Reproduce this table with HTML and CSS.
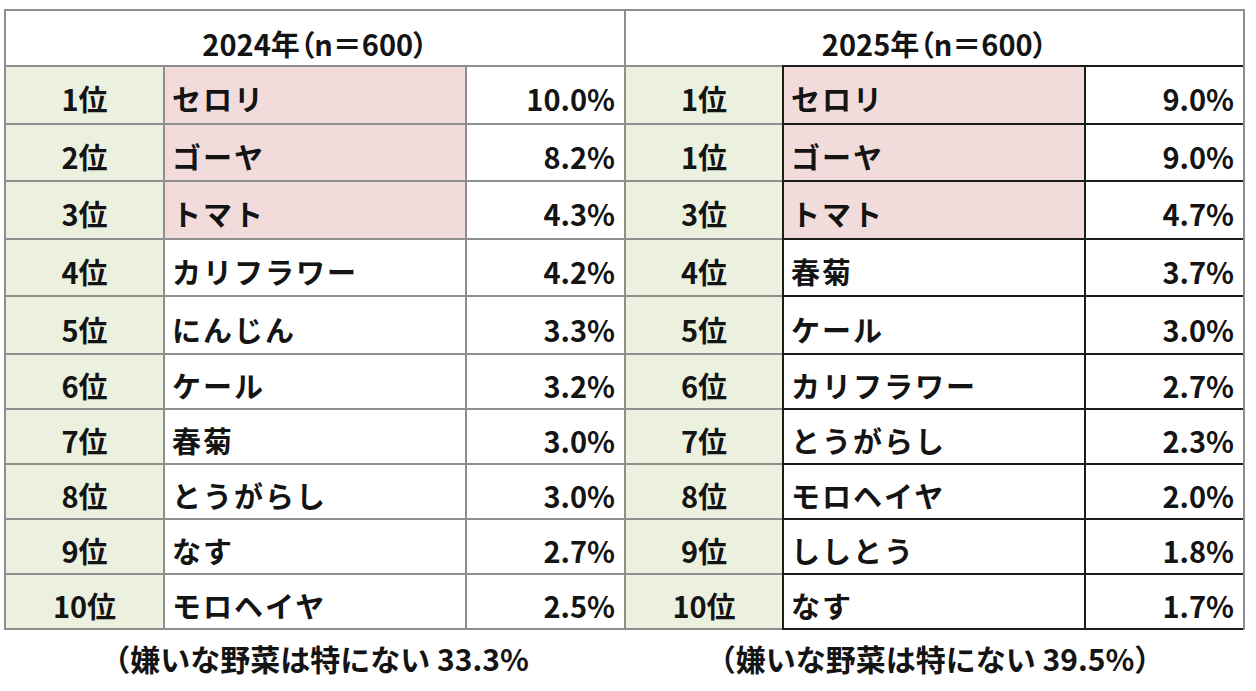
FILE: index.html
```html
<!DOCTYPE html>
<html lang="ja">
<head>
<meta charset="utf-8">
<title>嫌いな野菜ランキング</title>
<link rel="stylesheet" href="styles.css">
</head>
<body>
<div class="page">
  <div class="grid">
    <div class="c hd">2024年（n＝600）</div>
    <div class="c hd">2025年（n＝600）</div>

    <div class="c rk">1位</div><div class="c nm pink">セロリ</div><div class="c pc">10.0%</div>
    <div class="c rk">1位</div><div class="c nm pink dk">セロリ</div><div class="c pc dk">9.0%</div>

    <div class="c rk">2位</div><div class="c nm pink">ゴーヤ</div><div class="c pc">8.2%</div>
    <div class="c rk">1位</div><div class="c nm pink dk">ゴーヤ</div><div class="c pc dk">9.0%</div>

    <div class="c rk">3位</div><div class="c nm pink">トマト</div><div class="c pc">4.3%</div>
    <div class="c rk">3位</div><div class="c nm pink dk">トマト</div><div class="c pc dk">4.7%</div>

    <div class="c rk">4位</div><div class="c nm">カリフラワー</div><div class="c pc">4.2%</div>
    <div class="c rk">4位</div><div class="c nm dk">春菊</div><div class="c pc dk">3.7%</div>

    <div class="c rk">5位</div><div class="c nm">にんじん</div><div class="c pc">3.3%</div>
    <div class="c rk">5位</div><div class="c nm dk">ケール</div><div class="c pc dk">3.0%</div>

    <div class="c rk">6位</div><div class="c nm">ケール</div><div class="c pc">3.2%</div>
    <div class="c rk">6位</div><div class="c nm dk">カリフラワー</div><div class="c pc dk">2.7%</div>

    <div class="c rk">7位</div><div class="c nm">春菊</div><div class="c pc">3.0%</div>
    <div class="c rk">7位</div><div class="c nm dk">とうがらし</div><div class="c pc dk">2.3%</div>

    <div class="c rk">8位</div><div class="c nm">とうがらし</div><div class="c pc">3.0%</div>
    <div class="c rk">8位</div><div class="c nm dk">モロヘイヤ</div><div class="c pc dk">2.0%</div>

    <div class="c rk">9位</div><div class="c nm">なす</div><div class="c pc">2.7%</div>
    <div class="c rk">9位</div><div class="c nm dk">ししとう</div><div class="c pc dk">1.8%</div>

    <div class="c rk">10位</div><div class="c nm">モロヘイヤ</div><div class="c pc">2.5%</div>
    <div class="c rk">10位</div><div class="c nm dk">なす</div><div class="c pc dk">1.7%</div>
  </div>
  <div class="notes">
    <p class="note">（嫌いな野菜は特にない 33.3%</p>
    <p class="note">（嫌いな野菜は特にない 39.5%）</p>
  </div>
</div>
</body>
</html>
```

FILE: styles.css
```css
html, body {
  margin: 0;
  padding: 0;
  background: #ffffff;
}

body {
  font-family: "Noto Sans CJK JP", "Noto Sans", sans-serif;
  font-weight: 700;
  color: #141414;
}

.page {
  padding: 9px 0 0 4px;
}

.grid {
  display: grid;
  width: 1241px;
  box-sizing: border-box;
  grid-template-columns: 159px 302px 159px 158px 302px 159px;
  grid-template-rows: 56px repeat(5, 57.6px) repeat(4, 55px) 57px;
  border-right: 2px solid #8e8e8e;
}

.c {
  box-sizing: border-box;
  display: flex;
  align-items: center;
  border-top: 2px solid #8e8e8e;
  border-left: 2px solid #8e8e8e;
  font-size: 29px;
  line-height: 1;
  padding-top: 8px;
  white-space: nowrap;
  background: #ffffff;
}

.grid > .c:nth-last-child(-n+6) {
  border-bottom: 2px solid #8e8e8e;
}

.grid > .dk {
  border-top-color: #1c1c1c;
  border-left-color: #1c1c1c;
}

.grid > .dk:nth-last-child(-n+6) {
  border-bottom-color: #1c1c1c;
}

.hd {
  grid-column: span 3;
  justify-content: center;
  font-size: 29px;
  font-feature-settings: "palt";
  padding-top: 10px;
}

.rk {
  justify-content: center;
  background: #ebf1de;
}

.nm {
  padding-left: 7px;
  letter-spacing: 2px;
}

.pink {
  background: #f2dcdb;
}

.pc {
  justify-content: flex-end;
  padding-right: 9px;
}

.notes {
  display: grid;
  grid-template-columns: 621px 620px;
  margin-top: 10px;
}

.note {
  margin: 0;
  text-align: center;
  font-size: 30px;
  line-height: 36px;
}
```
